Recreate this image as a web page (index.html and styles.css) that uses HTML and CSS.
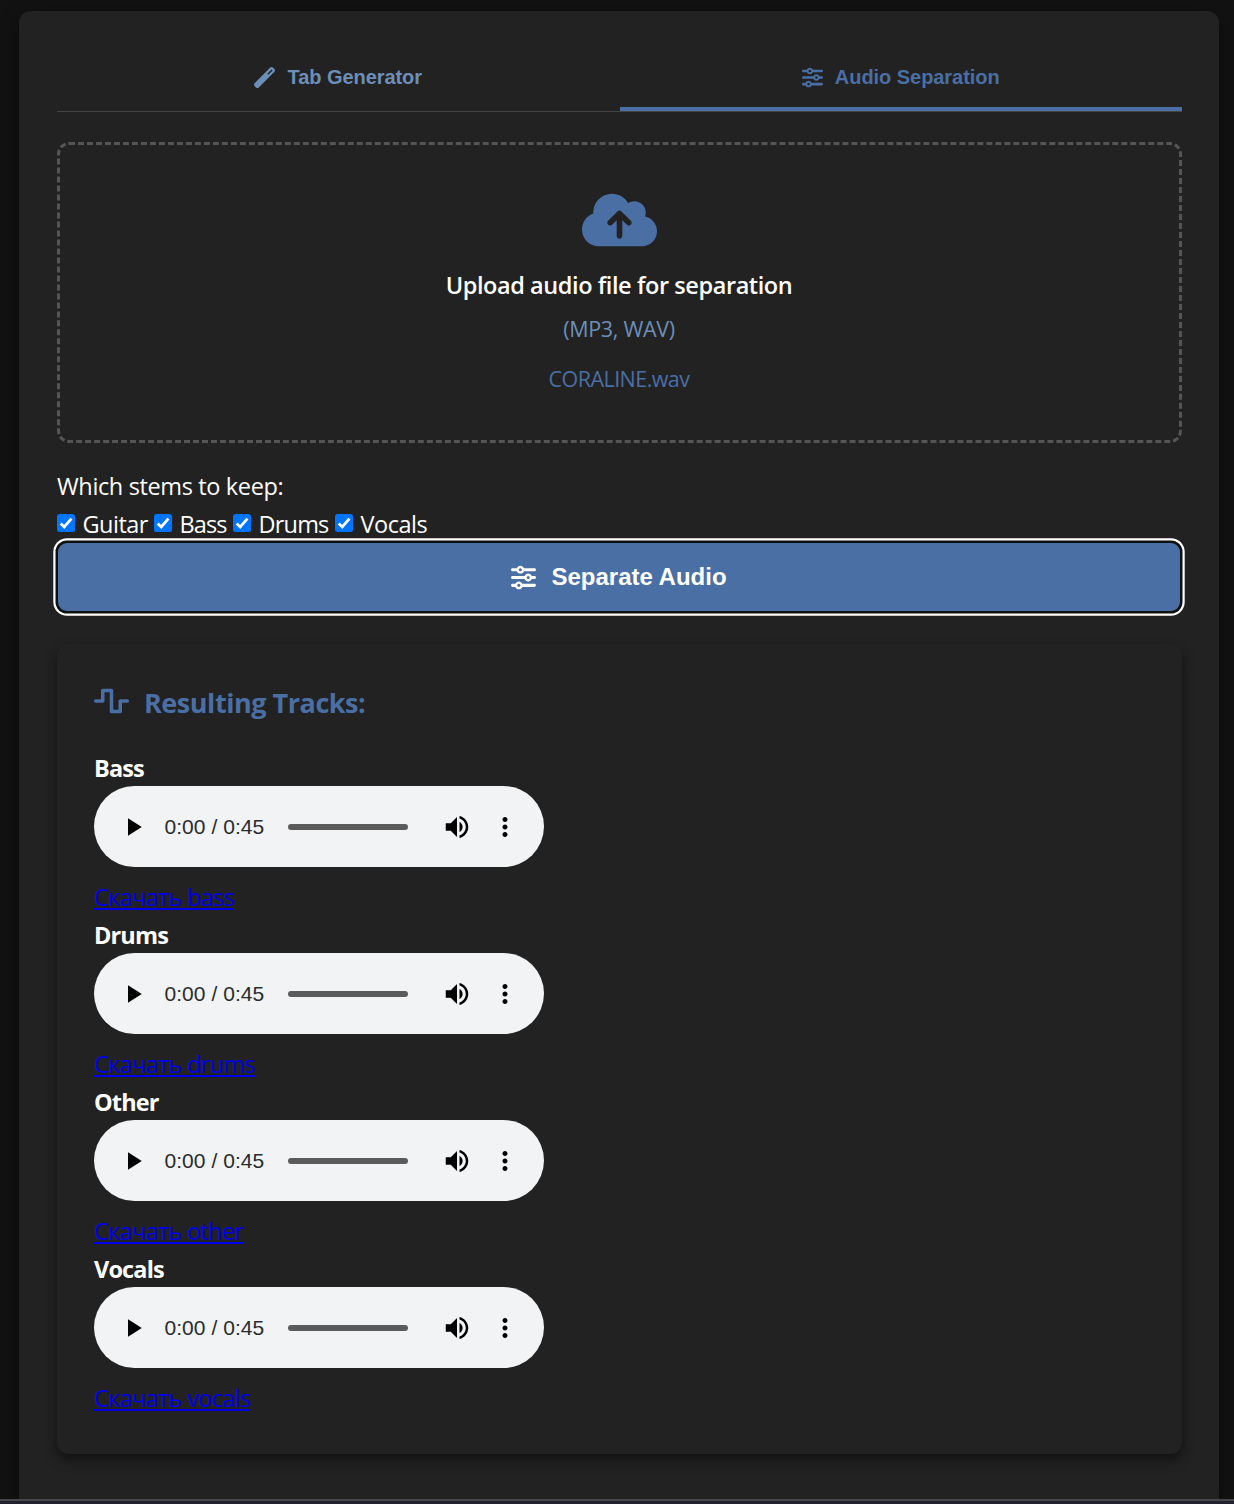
FILE: index.html
```html
<!DOCTYPE html>
<html lang="en">
<head>
<meta charset="utf-8">
<title>Audio Separation</title>
<link rel="stylesheet" href="styles.css">
</head>
<body>
<svg class="sprite" aria-hidden="true">
  <symbol id="sliders" viewBox="0 0 512 512"><path d="M0 416c0 17.700 14.300 32 32 32l54.700 0c12.300 28.300 40.500 48 73.300 48s61-19.700 73.300-48L480 448c17.700 0 32-14.300 32-32s-14.300-32-32-32l-246.700 0c-12.300-28.300-40.500-48-73.300-48s-61 19.700-73.300 48L32 384c-17.700 0-32 14.300-32 32zm128 0a32 32 0 1 1 64 0 32 32 0 1 1 -64 0zM320 256a32 32 0 1 1 64 0 32 32 0 1 1 -64 0zm32-80c-32.800 0-61 19.700-73.300 48L32 224c-17.700 0-32 14.300-32 32s14.300 32 32 32l246.700 0c12.300 28.300 40.500 48 73.300 48s61-19.700 73.300-48l54.700 0c17.700 0 32-14.300 32-32s-14.300-32-32-32l-54.700 0c-12.300-28.300-40.500-48-73.300-48zM192 128a32 32 0 1 1 0-64 32 32 0 1 1 0 64zm73.300-64C253 35.700 224.800 16 192 16s-61 19.700-73.300 48L32 64C14.300 64 0 78.300 0 96s14.300 32 32 32l86.700 0c12.300 28.300 40.500 48 73.300 48s61-19.700 73.300-48L480 128c17.700 0 32-14.300 32-32s-14.300-32-32-32L265.300 64z"/></symbol>
  <symbol id="play" viewBox="0 0 24 24"><path d="M8 5v14l11-7z"/></symbol>
  <symbol id="volume" viewBox="0 0 24 24"><path d="M3 9v6h4l5 5V4L7 9H3zm13.500 3c0-1.770-1.020-3.290-2.500-4.030v8.050c1.480-.730 2.500-2.250 2.500-4.020zM14 3.230v2.060c2.890.860 5 3.540 5 6.710s-2.110 5.850-5 6.710v2.060c4.010-.910 7-4.490 7-8.770s-2.990-7.860-7-8.770z"/></symbol>
  <symbol id="more" viewBox="0 0 24 24"><path d="M12 8c1.100 0 2-.900 2-2s-.900-2-2-2-2 .900-2 2 .900 2 2 2zm0 2c-1.100 0-2 .900-2 2s.900 2 2 2 2-.900 2-2-.900-2-2-2zm0 6c-1.100 0-2 .900-2 2s.900 2 2 2 2-.900 2-2-.900-2-2-2z"/></symbol>
</svg>
<main class="container">
  <nav class="tabs">
    <button class="tab">
      <svg class="tab-icon" viewBox="0 0 512 512"><path d="M14.100 463.300c-18.700-18.700-18.700-49.100 0-67.900L395.400 14.100c18.700-18.700 49.100-18.700 67.900 0l34.600 34.600c18.700 18.700 18.700 49.100 0 67.900L116.500 497.900c-18.700 18.700-49.100 18.700-67.900 0L14.100 463.300zM347.600 187.600l105-105L429.400 59.300l-105 105 23.300 23.300z"/></svg>
      <span>Tab Generator</span>
    </button>
    <button class="tab active">
      <svg class="tab-icon"><use href="#sliders"/></svg>
      <span>Audio Separation</span>
    </button>
  </nav>

  <section class="upload">
    <svg class="cloud" viewBox="0 0 640 512"><path d="M144 480C64.500 480 0 415.500 0 336c0-62.800 40.200-116.200 96.200-135.900c-.100-2.700-.200-5.400-.200-8.100c0-88.400 71.600-160 160-160c59.300 0 111 32.200 138.700 80.200C409.900 102 428.300 96 448 96c53 0 96 43 96 96c0 12.200-2.300 23.800-6.400 34.600C596 238.400 640 290.100 640 352c0 70.700-57.300 128-128 128H144zm79-217c-9.400 9.400-9.400 24.600 0 33.900s24.600 9.400 33.900 0l39-39V392c0 13.300 10.700 24 24 24s24-10.700 24-24V257.900l39 39c9.400 9.400 24.600 9.400 33.900 0s9.400-24.600 0-33.900l-80-80c-9.400-9.400-24.600-9.400-33.900 0l-80 80z"/></svg>
    <p class="upload-title">Upload audio file for separation</p>
    <p class="upload-types">(MP3, WAV)</p>
    <p class="upload-name">CORALINE.wav</p>
  </section>

  <div class="stems">
    <p class="stems-title">Which stems to keep:</p>
    <div class="stems-list">
      <label class="stem guitar"><svg class="check" viewBox="0 0 18 18"><rect width="18" height="18" rx="2.500"/><path d="M3.700 9.500l3.500 3.500 7.200-8.300"/></svg><span>Guitar</span></label>
      <label class="stem bass"><svg class="check" viewBox="0 0 18 18"><rect width="18" height="18" rx="2.500"/><path d="M3.700 9.500l3.500 3.500 7.200-8.300"/></svg><span>Bass</span></label>
      <label class="stem drums"><svg class="check" viewBox="0 0 18 18"><rect width="18" height="18" rx="2.500"/><path d="M3.700 9.500l3.500 3.500 7.200-8.300"/></svg><span>Drums</span></label>
      <label class="stem vocals"><svg class="check" viewBox="0 0 18 18"><rect width="18" height="18" rx="2.500"/><path d="M3.700 9.500l3.500 3.500 7.200-8.300"/></svg><span>Vocals</span></label>
    </div>
  </div>

  <button class="separate"><svg class="separate-icon"><use href="#sliders"/></svg><span>Separate Audio</span></button>

  <section class="results">
    <h2 class="results-title">
      <svg class="wave" viewBox="0 0 640 512"><path d="M128 64c0-17.700 14.300-32 32-32l160 0c17.700 0 32 14.300 32 32l0 352 96 0 0-160c0-17.700 14.300-32 32-32l128 0c17.700 0 32 14.300 32 32s-14.300 32-32 32l-96 0 0 160c0 17.700-14.300 32-32 32l-160 0c-17.700 0-32-14.300-32-32l0-352-96 0 0 160c0 17.700-14.300 32-32 32L32 288c-17.700 0-32-14.300-32-32s14.300-32 32-32l96 0 0-160z"/></svg>
      <span>Resulting Tracks:</span>
    </h2>
    <article class="track">
      <strong class="track-name">Bass</strong>
      <div class="player"><svg class="play"><use href="#play"/></svg><span class="time">0:00 / 0:45</span><span class="bar"></span><svg class="volume"><use href="#volume"/></svg><svg class="more"><use href="#more"/></svg></div>
      <a class="download" href="#">Скачать bass</a>
    </article>
    <article class="track">
      <strong class="track-name">Drums</strong>
      <div class="player"><svg class="play"><use href="#play"/></svg><span class="time">0:00 / 0:45</span><span class="bar"></span><svg class="volume"><use href="#volume"/></svg><svg class="more"><use href="#more"/></svg></div>
      <a class="download" href="#">Скачать drums</a>
    </article>
    <article class="track">
      <strong class="track-name">Other</strong>
      <div class="player"><svg class="play"><use href="#play"/></svg><span class="time">0:00 / 0:45</span><span class="bar"></span><svg class="volume"><use href="#volume"/></svg><svg class="more"><use href="#more"/></svg></div>
      <a class="download" href="#">Скачать other</a>
    </article>
    <article class="track">
      <strong class="track-name">Vocals</strong>
      <div class="player"><svg class="play"><use href="#play"/></svg><span class="time">0:00 / 0:45</span><span class="bar"></span><svg class="volume"><use href="#volume"/></svg><svg class="more"><use href="#more"/></svg></div>
      <a class="download" href="#">Скачать vocals</a>
    </article>
  </section>
</main>
<footer class="edge"></footer>
</body>
</html>
```
FILE: styles.css
```css
* { box-sizing: border-box; margin: 0; padding: 0; }
body {
  height: 1504px;
  overflow: hidden;
  padding-top: 11px;
  background: #121212;
  color: #fff;
  font-family: "Segoe UI", "Open Sans", sans-serif;
  font-size: 23.5px;
}
.sprite { display: none; }
svg { display: block; flex: none; fill: currentColor; }
button { border: 0; background: none; font-family: "Liberation Sans", Arial, sans-serif; font-weight: 700; }
.container {
  width: 1200px;
  height: 1488px;
  margin-left: 19px;
  padding: 38px 37px 0 38px;
  background: #222;
  border-radius: 12px 12px 0 0;
  box-shadow: 0 6px 18px rgba(0, 0, 0, .5);
}
.tabs { display: flex; height: 63px; border-bottom: 1px solid #444; }
.tab {
  flex: 1;
  display: flex;
  align-items: center;
  justify-content: center;
  gap: 12px;
  padding-bottom: 2px;
  border-bottom: 4px solid transparent;
  color: #6b8fb8;
  font-size: 20px;
  letter-spacing: -.05px;
}
.tab.active { color: #4a6fa5; border-color: #4a6fa5; }
.tab-icon { width: 21px; height: 21px; }
.upload {
  display: flex;
  flex-direction: column;
  align-items: center;
  height: 301px;
  margin-top: 30px;
  padding: 45px 1px 0 0;
  border: 3px dashed #555;
  border-radius: 12px;
}
.cloud { width: 75px; height: 60px; color: #4a6fa5; }
.upload-title { margin-top: 17px; line-height: 36px; font-weight: 600; letter-spacing: -.42px; }
.upload-types { margin-top: 10px; line-height: 32px; font-size: 21.5px; letter-spacing: -.3px; color: #6b8fb8; }
.upload-name { margin-top: 18px; line-height: 32px; font-size: 21.5px; letter-spacing: -.55px; color: #4a6fa5; }
.stems { margin-top: 24px; }
.stems-title { line-height: 38px; letter-spacing: -.36px; }
.stems-list { display: flex; height: 38px; }
.stem { display: flex; line-height: 39px; letter-spacing: -.5px; }
.guitar { width: 97px; }
.bass { width: 79px; letter-spacing: -.9px; }
.drums { width: 102px; letter-spacing: -.8px; }
.check { width: 18px; height: 18px; margin: 9px 7.5px 0 0; }
.check rect { fill: #0075ff; }
.check path { fill: none; stroke: #fff; stroke-width: 2.800; }
.separate {
  display: flex;
  align-items: center;
  justify-content: center;
  gap: 15px;
  width: 1122px;
  height: 68px;
  margin: 0 0 0 1px;
  background: #4a6fa5;
  border-radius: 9px;
  color: #fff;
  font-size: 24px;
  box-shadow: 0 0 0 2.500px #101010, 0 0 0 4.700px #fff;
}
.separate-icon { width: 25px; height: 25px; }
.results {
  height: 810px;
  margin-top: 33px;
  padding: 37px 37px 0;
  border-radius: 12px;
  box-shadow: 0 6px 12px rgba(0, 0, 0, .5);
}
.results-title { display: flex; align-items: center; gap: 15px; height: 42px; font-size: 27px; letter-spacing: -.46px; color: #4a6fa5; }
.wave { width: 35px; height: 28px; margin-top: -2px; }
.track { display: flex; flex-direction: column; align-items: flex-start; height: 167px; }
.results-title + .track { margin-top: 26px; }
.track-name { height: 37px; line-height: 39px; font-weight: 700; letter-spacing: -.85px; }
.player {
  display: flex;
  align-items: center;
  width: 450px;
  height: 81px;
  padding-left: 24px;
  border-radius: 41px;
  background: #f1f3f4;
  color: #000;
}
.player svg { width: 30px; height: 30px; }
.time { width: 123.5px; margin-left: 16.5px; font: 21px/30px "Liberation Sans", Arial, sans-serif; letter-spacing: .05px; color: #2a2b2d; white-space: nowrap; }
.bar { width: 120px; height: 6px; border-radius: 3px; background: #5b5b5c; }
.volume { margin-left: 34px; }
.more { margin-left: 18px; }
.download { margin-top: 11px; line-height: 38px; color: #00e; letter-spacing: -.68px; text-decoration-thickness: 2px; text-underline-offset: 2px; }
.edge { height: 5px; border-top: 2px solid #47484b; background: #202230; }
```
